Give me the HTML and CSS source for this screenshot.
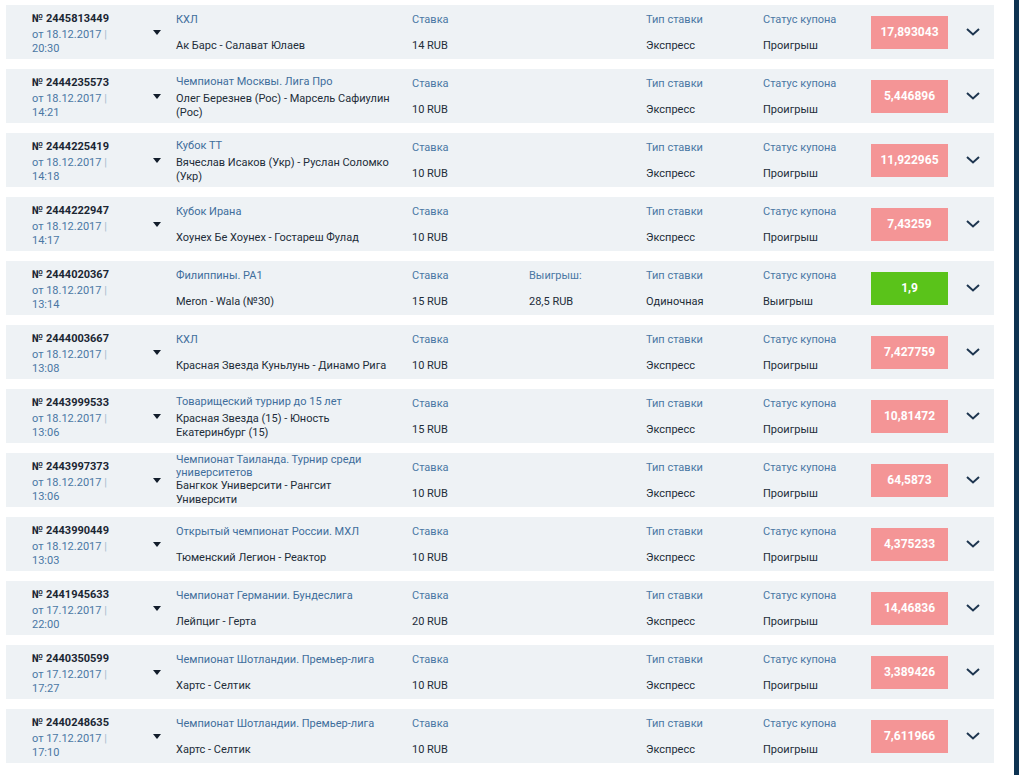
FILE: index.html
```html
<!DOCTYPE html>
<html lang="ru">
<head>
<meta charset="utf-8">
<title>Купоны</title>
<link rel="stylesheet" href="styles.css">
</head>
<body>
<div class="layout">
  <main class="list">

    <div class="card">
      <div class="info"><div class="num">№ 2445813449</div><div class="date">от 18.12.2017 <span class="sep">|</span><br>20:30</div></div>
      <div class="toggle"><span class="tri"></span></div>
      <div class="match"><div class="tour">КХЛ</div><div class="teams">Ак Барс - Салават Юлаев</div></div>
      <div class="field"><div class="label">Ставка</div><div class="value">14 RUB</div></div>
      <div class="field"></div>
      <div class="field"><div class="label">Тип ставки</div><div class="value">Экспресс</div></div>
      <div class="field"><div class="label">Статус купона</div><div class="value">Проигрыш</div></div>
      <div class="badge lose">17,893043</div>
      <div class="chev"><svg width="14" height="8" viewBox="0 0 14 8"><polyline points="1,1 7,6.5 13,1"/></svg></div>
    </div>

    <div class="card">
      <div class="info"><div class="num">№ 2444235573</div><div class="date">от 18.12.2017 <span class="sep">|</span><br>14:21</div></div>
      <div class="toggle"><span class="tri"></span></div>
      <div class="match"><div class="tour">Чемпионат Москвы. Лига Про</div><div class="teams">Олег Березнев (Рос) - Марсель Сафиулин (Рос)</div></div>
      <div class="field"><div class="label">Ставка</div><div class="value">10 RUB</div></div>
      <div class="field"></div>
      <div class="field"><div class="label">Тип ставки</div><div class="value">Экспресс</div></div>
      <div class="field"><div class="label">Статус купона</div><div class="value">Проигрыш</div></div>
      <div class="badge lose">5,446896</div>
      <div class="chev"><svg width="14" height="8" viewBox="0 0 14 8"><polyline points="1,1 7,6.5 13,1"/></svg></div>
    </div>

    <div class="card">
      <div class="info"><div class="num">№ 2444225419</div><div class="date">от 18.12.2017 <span class="sep">|</span><br>14:18</div></div>
      <div class="toggle"><span class="tri"></span></div>
      <div class="match"><div class="tour">Кубок ТТ</div><div class="teams">Вячеслав Исаков (Укр) - Руслан Соломко (Укр)</div></div>
      <div class="field"><div class="label">Ставка</div><div class="value">10 RUB</div></div>
      <div class="field"></div>
      <div class="field"><div class="label">Тип ставки</div><div class="value">Экспресс</div></div>
      <div class="field"><div class="label">Статус купона</div><div class="value">Проигрыш</div></div>
      <div class="badge lose">11,922965</div>
      <div class="chev"><svg width="14" height="8" viewBox="0 0 14 8"><polyline points="1,1 7,6.5 13,1"/></svg></div>
    </div>

    <div class="card">
      <div class="info"><div class="num">№ 2444222947</div><div class="date">от 18.12.2017 <span class="sep">|</span><br>14:17</div></div>
      <div class="toggle"><span class="tri"></span></div>
      <div class="match"><div class="tour">Кубок Ирана</div><div class="teams">Хоунех Бе Хоунех - Гостареш Фулад</div></div>
      <div class="field"><div class="label">Ставка</div><div class="value">10 RUB</div></div>
      <div class="field"></div>
      <div class="field"><div class="label">Тип ставки</div><div class="value">Экспресс</div></div>
      <div class="field"><div class="label">Статус купона</div><div class="value">Проигрыш</div></div>
      <div class="badge lose">7,43259</div>
      <div class="chev"><svg width="14" height="8" viewBox="0 0 14 8"><polyline points="1,1 7,6.5 13,1"/></svg></div>
    </div>

    <div class="card">
      <div class="info"><div class="num">№ 2444020367</div><div class="date">от 18.12.2017 <span class="sep">|</span><br>13:14</div></div>
      <div class="toggle"></div>
      <div class="match"><div class="tour">Филиппины. PA1</div><div class="teams">Meron - Wala (№30)</div></div>
      <div class="field"><div class="label">Ставка</div><div class="value">15 RUB</div></div>
      <div class="field"><div class="label">Выигрыш:</div><div class="value">28,5 RUB</div></div>
      <div class="field"><div class="label">Тип ставки</div><div class="value">Одиночная</div></div>
      <div class="field"><div class="label">Статус купона</div><div class="value">Выигрыш</div></div>
      <div class="badge win">1,9</div>
      <div class="chev"><svg width="14" height="8" viewBox="0 0 14 8"><polyline points="1,1 7,6.5 13,1"/></svg></div>
    </div>

    <div class="card">
      <div class="info"><div class="num">№ 2444003667</div><div class="date">от 18.12.2017 <span class="sep">|</span><br>13:08</div></div>
      <div class="toggle"><span class="tri"></span></div>
      <div class="match"><div class="tour">КХЛ</div><div class="teams">Красная Звезда Куньлунь - Динамо Рига</div></div>
      <div class="field"><div class="label">Ставка</div><div class="value">10 RUB</div></div>
      <div class="field"></div>
      <div class="field"><div class="label">Тип ставки</div><div class="value">Экспресс</div></div>
      <div class="field"><div class="label">Статус купона</div><div class="value">Проигрыш</div></div>
      <div class="badge lose">7,427759</div>
      <div class="chev"><svg width="14" height="8" viewBox="0 0 14 8"><polyline points="1,1 7,6.5 13,1"/></svg></div>
    </div>

    <div class="card">
      <div class="info"><div class="num">№ 2443999533</div><div class="date">от 18.12.2017 <span class="sep">|</span><br>13:06</div></div>
      <div class="toggle"><span class="tri"></span></div>
      <div class="match"><div class="tour">Товарищеский турнир до 15 лет</div><div class="teams">Красная Звезда (15) - Юность Екатеринбург (15)</div></div>
      <div class="field"><div class="label">Ставка</div><div class="value">15 RUB</div></div>
      <div class="field"></div>
      <div class="field"><div class="label">Тип ставки</div><div class="value">Экспресс</div></div>
      <div class="field"><div class="label">Статус купона</div><div class="value">Проигрыш</div></div>
      <div class="badge lose">10,81472</div>
      <div class="chev"><svg width="14" height="8" viewBox="0 0 14 8"><polyline points="1,1 7,6.5 13,1"/></svg></div>
    </div>

    <div class="card">
      <div class="info"><div class="num">№ 2443997373</div><div class="date">от 18.12.2017 <span class="sep">|</span><br>13:06</div></div>
      <div class="toggle"><span class="tri"></span></div>
      <div class="match match-long"><div class="tour">Чемпионат Таиланда. Турнир среди университетов</div><div class="teams">Бангкок Университи - Рангсит Университи</div></div>
      <div class="field"><div class="label">Ставка</div><div class="value">10 RUB</div></div>
      <div class="field"></div>
      <div class="field"><div class="label">Тип ставки</div><div class="value">Экспресс</div></div>
      <div class="field"><div class="label">Статус купона</div><div class="value">Проигрыш</div></div>
      <div class="badge lose">64,5873</div>
      <div class="chev"><svg width="14" height="8" viewBox="0 0 14 8"><polyline points="1,1 7,6.5 13,1"/></svg></div>
    </div>

    <div class="card">
      <div class="info"><div class="num">№ 2443990449</div><div class="date">от 18.12.2017 <span class="sep">|</span><br>13:03</div></div>
      <div class="toggle"><span class="tri"></span></div>
      <div class="match"><div class="tour">Открытый чемпионат России. МХЛ</div><div class="teams">Тюменский Легион - Реактор</div></div>
      <div class="field"><div class="label">Ставка</div><div class="value">10 RUB</div></div>
      <div class="field"></div>
      <div class="field"><div class="label">Тип ставки</div><div class="value">Экспресс</div></div>
      <div class="field"><div class="label">Статус купона</div><div class="value">Проигрыш</div></div>
      <div class="badge lose">4,375233</div>
      <div class="chev"><svg width="14" height="8" viewBox="0 0 14 8"><polyline points="1,1 7,6.5 13,1"/></svg></div>
    </div>

    <div class="card">
      <div class="info"><div class="num">№ 2441945633</div><div class="date">от 17.12.2017 <span class="sep">|</span><br>22:00</div></div>
      <div class="toggle"><span class="tri"></span></div>
      <div class="match"><div class="tour">Чемпионат Германии. Бундеслига</div><div class="teams">Лейпциг - Герта</div></div>
      <div class="field"><div class="label">Ставка</div><div class="value">20 RUB</div></div>
      <div class="field"></div>
      <div class="field"><div class="label">Тип ставки</div><div class="value">Экспресс</div></div>
      <div class="field"><div class="label">Статус купона</div><div class="value">Проигрыш</div></div>
      <div class="badge lose">14,46836</div>
      <div class="chev"><svg width="14" height="8" viewBox="0 0 14 8"><polyline points="1,1 7,6.5 13,1"/></svg></div>
    </div>

    <div class="card">
      <div class="info"><div class="num">№ 2440350599</div><div class="date">от 17.12.2017 <span class="sep">|</span><br>17:27</div></div>
      <div class="toggle"><span class="tri"></span></div>
      <div class="match"><div class="tour">Чемпионат Шотландии. Премьер-лига</div><div class="teams">Хартс - Селтик</div></div>
      <div class="field"><div class="label">Ставка</div><div class="value">10 RUB</div></div>
      <div class="field"></div>
      <div class="field"><div class="label">Тип ставки</div><div class="value">Экспресс</div></div>
      <div class="field"><div class="label">Статус купона</div><div class="value">Проигрыш</div></div>
      <div class="badge lose">3,389426</div>
      <div class="chev"><svg width="14" height="8" viewBox="0 0 14 8"><polyline points="1,1 7,6.5 13,1"/></svg></div>
    </div>

    <div class="card">
      <div class="info"><div class="num">№ 2440248635</div><div class="date">от 17.12.2017 <span class="sep">|</span><br>17:10</div></div>
      <div class="toggle"><span class="tri"></span></div>
      <div class="match"><div class="tour">Чемпионат Шотландии. Премьер-лига</div><div class="teams">Хартс - Селтик</div></div>
      <div class="field"><div class="label">Ставка</div><div class="value">10 RUB</div></div>
      <div class="field"></div>
      <div class="field"><div class="label">Тип ставки</div><div class="value">Экспресс</div></div>
      <div class="field"><div class="label">Статус купона</div><div class="value">Проигрыш</div></div>
      <div class="badge lose">7,611966</div>
      <div class="chev"><svg width="14" height="8" viewBox="0 0 14 8"><polyline points="1,1 7,6.5 13,1"/></svg></div>
    </div>

  </main>
  <div class="rail"></div>
</div>
</body>
</html>
```

FILE: styles.css
```css
* { box-sizing: border-box; }

html, body {
  margin: 0;
  padding: 0;
  background: #ffffff;
}

body {
  font-family: Roboto, "Liberation Sans", sans-serif;
  font-size: 11px;
  color: #222d39;
}

.layout {
  display: flex;
  min-height: 100vh;
}

.list {
  flex: 1;
  padding: 5px 20px 0 6px;
  display: flex;
  flex-direction: column;
  gap: 10px;
}

.rail {
  width: 5px;
  background: #0e3352;
}

.card {
  height: 54px;
  background: #eef2f5;
  padding-left: 26px;
  display: grid;
  grid-template-columns: 115px 29px 236px 117px 117px 117px 108px 77px 1fr;
  align-items: center;
}

.info {
  align-self: start;
  padding-top: 7px;
  display: flex;
  flex-direction: column;
  gap: 2px;
  line-height: 14px;
}

.num {
  font-weight: 700;
  color: #1b2633;
}

.date {
  color: #4a77a4;
}

.sep {
  color: #a9bccf;
}

.toggle {
  display: flex;
  align-items: center;
  padding-left: 6px;
}

.tri {
  width: 0;
  height: 0;
  border-left: 4px solid transparent;
  border-right: 4px solid transparent;
  border-top: 5px solid #121d2b;
}

.match {
  padding: 2px 20px 0 0;
  min-height: 42px;
  display: flex;
  flex-direction: column;
  justify-content: space-between;
  gap: 4px;
}

.match-long {
  gap: 0;
  padding-top: 0;
}

.tour {
  color: #3f6e9c;
  line-height: 13px;
}

.teams {
  color: #222d39;
  line-height: 14px;
}

.field {
  align-self: start;
  margin-top: 8px;
  height: 40px;
  display: flex;
  flex-direction: column;
  justify-content: space-between;
  line-height: 14px;
}

.label {
  color: #4a77a4;
}

.value {
  color: #222d39;
}

.badge {
  height: 33px;
  display: flex;
  align-items: center;
  justify-content: center;
  color: #ffffff;
  font-weight: 700;
  font-size: 12px;
}

.badge.lose {
  background: #f49596;
}

.badge.win {
  background: #5ac31a;
}

.chev {
  display: flex;
  align-items: center;
  padding-left: 18px;
}

.chev svg {
  display: block;
}

.chev polyline {
  fill: none;
  stroke: #1e3650;
  stroke-width: 2;
}
```
